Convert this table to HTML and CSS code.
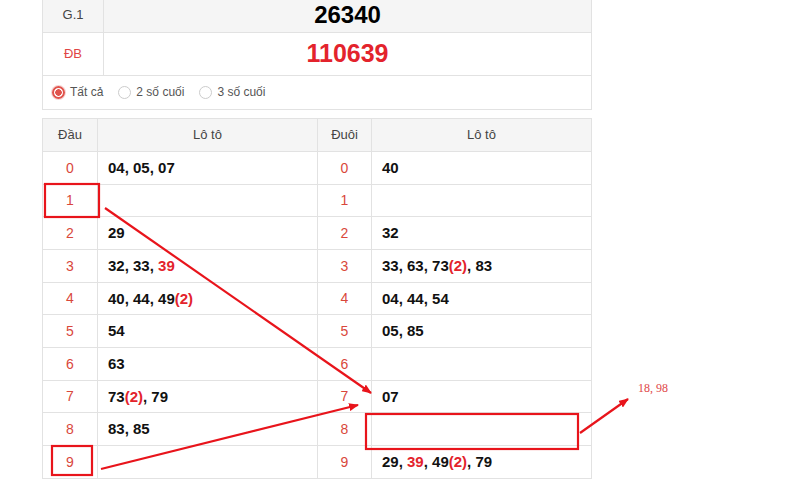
FILE: index.html
```html
<!DOCTYPE html>
<html lang="vi">
  <head>
    <meta charset="UTF-8" />
    <meta name="viewport" content="width=device-width, initial-scale=1.0" />
    <title>Lô tô</title>
    <link rel="stylesheet" href="styles.css">
  </head>
  <body>
    <div class="page">
      <table class="prize">
        <tr class="g1">
          <th>G.1</th>
          <td>26340</td>
        </tr>
        <tr class="db">
          <th>ĐB</th>
          <td>110639</td>
        </tr>
      </table>
      <div class="filter">
        <label class="radio checked"><i></i>Tất cả</label>
        <label class="radio"><i></i>2 số cuối</label>
        <label class="radio"><i></i>3 số cuối</label>
      </div>

      <table class="loto">
        <thead>
          <tr>
            <th class="num">Đầu</th>
            <th>Lô tô</th>
            <th class="num">Đuôi</th>
            <th>Lô tô</th>
          </tr>
        </thead>
        <tbody>
          <tr><td class="num">0</td><td>04, 05, 07</td><td class="num">0</td><td>40</td></tr>
          <tr><td class="num">1</td><td></td><td class="num">1</td><td></td></tr>
          <tr><td class="num">2</td><td>29</td><td class="num">2</td><td>32</td></tr>
          <tr><td class="num">3</td><td>32, 33, <em>39</em></td><td class="num">3</td><td>33, 63, 73<em>(2)</em>, 83</td></tr>
          <tr><td class="num">4</td><td>40, 44, 49<em>(2)</em></td><td class="num">4</td><td>04, 44, 54</td></tr>
          <tr><td class="num">5</td><td>54</td><td class="num">5</td><td>05, 85</td></tr>
          <tr><td class="num">6</td><td>63</td><td class="num">6</td><td></td></tr>
          <tr><td class="num">7</td><td>73<em>(2)</em>, 79</td><td class="num">7</td><td>07</td></tr>
          <tr><td class="num">8</td><td>83, 85</td><td class="num">8</td><td></td></tr>
          <tr><td class="num">9</td><td></td><td class="num">9</td><td>29, <em>39</em>, 49<em>(2)</em>, 79</td></tr>
        </tbody>
      </table>

      <!-- hand-drawn notes over the table -->
      <svg class="marks" width="800" height="485" viewBox="0 0 800 485">
        <defs>
          <marker id="head" markerWidth="10" markerHeight="8" refX="9" refY="4" orient="auto" markerUnits="userSpaceOnUse">
            <path d="M0 0 L10 4 L0 8 Z" fill="#e8141b" />
          </marker>
        </defs>
        <g fill="none" stroke="#e8141b" stroke-width="2.2">
          <rect x="45" y="184" width="54" height="33" />
          <rect x="52" y="446" width="40" height="29" />
          <rect x="366" y="414" width="212" height="35" />
          <line x1="105" y1="208" x2="371" y2="393" marker-end="url(#head)" />
          <line x1="101" y1="469" x2="358" y2="405" marker-end="url(#head)" />
          <line x1="580" y1="433" x2="628" y2="399" marker-end="url(#head)" />
        </g>
      </svg>
      <span class="note">18, 98</span>
    </div>
  </body>
</html>
```

FILE: styles.css
```css
* {
  margin: 0;
  padding: 0;
  box-sizing: border-box;
}

body {
  font-family: Arial, "Liberation Sans", sans-serif;
  color: #222;
  background: #fff;
  overflow: hidden;
}

.page {
  display: flow-root;
  position: relative;
  width: 800px;
  height: 485px;
  padding-left: 42px;
}

table {
  border-collapse: collapse;
  width: 550px;
}

.prize th,
.prize td {
  border: 1px solid #e2e2e2;
  height: 43px;
  text-align: center;
}

.g1 th,
.g1 td {
  height: 32px;
  line-height: 22px;
  padding-bottom: 1px;
  border-top: none;
  background: #f5f5f5;
}

.prize th {
  width: 61px;
  font-weight: normal;
  font-size: 13px;
  color: #444;
}

.prize td {
  font-weight: bold;
  font-size: 24px;
  color: #000;
}

.db th {
  color: #e04545;
}

.db td {
  color: #e3232c;
  font-size: 25px;
}

.filter {
  display: flex;
  align-items: center;
  width: 550px;
  height: 34px;
  padding-left: 9px;
  border: 1px solid #e2e2e2;
  border-top: none;
  font-size: 12px;
  color: #555;
}

.radio {
  display: flex;
  align-items: center;
  margin-right: 15px;
}

.radio i {
  display: inline-block;
  width: 13px;
  height: 13px;
  margin-right: 5px;
  border: 1px solid #ccc;
  border-radius: 50%;
  background: #fff;
}

.radio.checked i {
  border: 2px solid #e0534c;
  background: radial-gradient(circle, #e0534c 0 3px, #fff 3.5px);
  box-shadow: 0 0 0 1px #f6d4d2;
}

.loto {
  margin-top: 8px;
  table-layout: fixed;
}

.loto th,
.loto td {
  border: 1px solid #e2e2e2;
  height: 33px;
  padding: 0 10px;
  font-size: 15px;
  font-weight: bold;
  color: #111;
  text-align: left;
}

.loto tbody tr:nth-child(3n+2) td {
  height: 32px;
}

.loto thead th {
  height: 33px;
  background: #f5f5f5;
  font-size: 13px;
  font-weight: normal;
  color: #444;
  text-align: center;
}

.loto th:nth-child(1) {
  width: 55px;
}

.loto th:nth-child(2) {
  width: 220px;
}

.loto th:nth-child(3) {
  width: 54px;
}

.loto td.num {
  padding: 0;
  text-align: center;
  font-weight: normal;
  font-size: 14px;
  color: #d9473b;
}

.loto em {
  font-style: normal;
  color: #e3232c;
}

.marks {
  position: absolute;
  top: 0;
  left: 0;
  pointer-events: none;
}

.note {
  position: absolute;
  left: 638px;
  top: 381px;
  font-family: "Liberation Serif", serif;
  font-size: 12px;
  color: #e04848;
}
```
